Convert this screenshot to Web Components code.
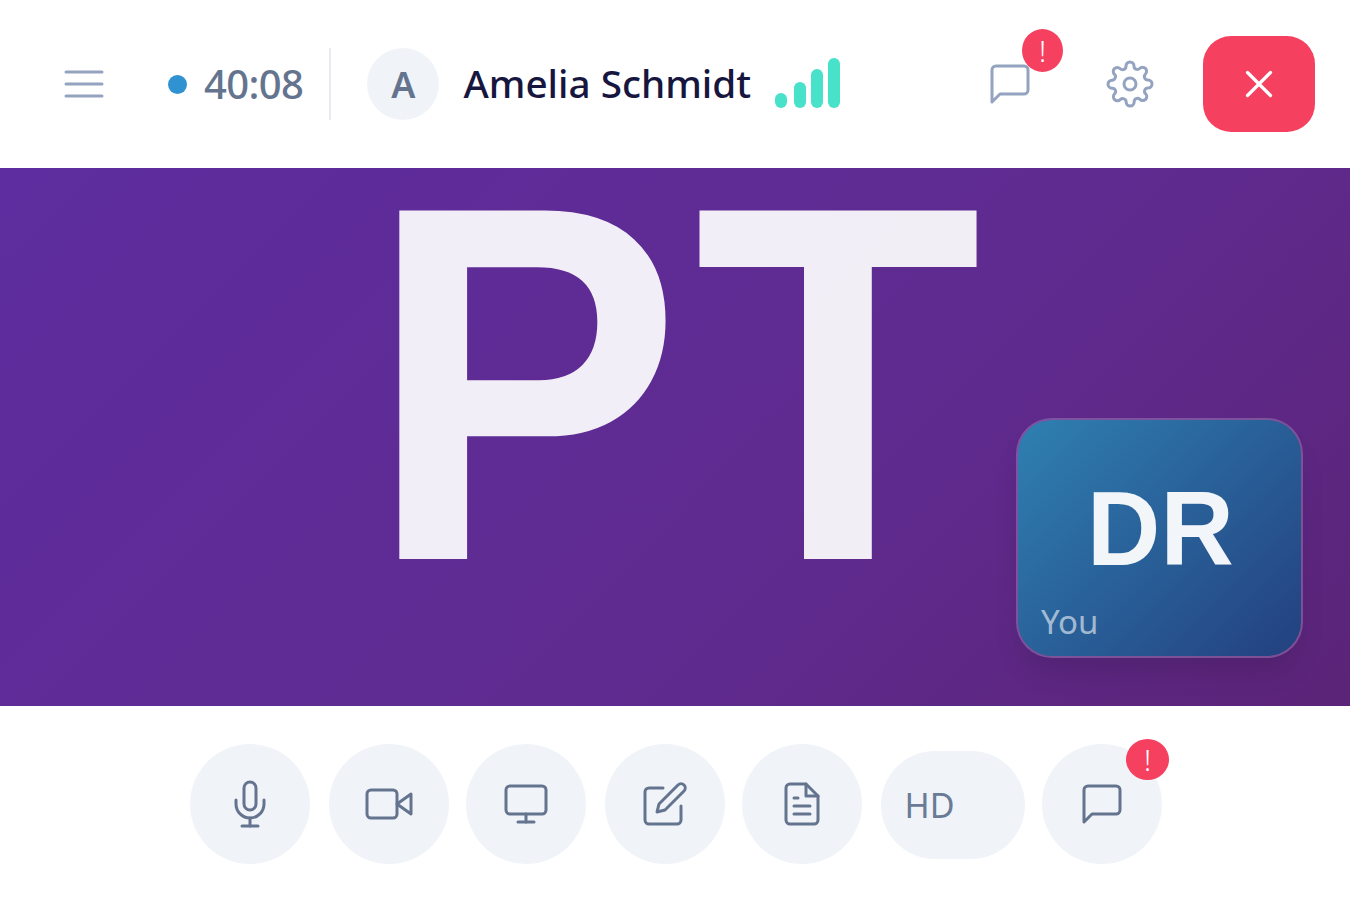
<!DOCTYPE html>
<html lang="en"><head><meta charset="utf-8"><title>Call</title>
<style>
html,body{margin:0;padding:0;background:#fff;}
body{font-family:"Noto Sans","Open Sans",sans-serif;}
</style></head>
<body>
<call-app>
  <call-header slot="header"></call-header>
  <call-stage slot="stage" initials="PT"><self-tile initials="DR" label="You"></self-tile></call-stage>
  <call-controls slot="controls"></call-controls>
</call-app>
<script>
const ICONS={
 menu:'<line x1="3" y1="12" x2="21" y2="12"/><line x1="3" y1="6" x2="21" y2="6"/><line x1="3" y1="18" x2="21" y2="18"/>',
 chat:'<path d="M21 15a2 2 0 0 1-2 2H7l-4 4V5a2 2 0 0 1 2-2h14a2 2 0 0 1 2 2z"/>',
 gear:'<circle cx="12" cy="12" r="3"/><path d="M19.4 15a1.65 1.65 0 0 0 .33 1.82l.06.06a2 2 0 0 1 0 2.83 2 2 0 0 1-2.83 0l-.06-.06a1.65 1.65 0 0 0-1.82-.33 1.65 1.65 0 0 0-1 1.51V21a2 2 0 0 1-2 2 2 2 0 0 1-2-2v-.09A1.65 1.65 0 0 0 9 19.4a1.65 1.65 0 0 0-1.82.33l-.06.06a2 2 0 0 1-2.83 0 2 2 0 0 1 0-2.83l.06-.06a1.65 1.65 0 0 0 .33-1.82 1.65 1.65 0 0 0-1.51-1H3a2 2 0 0 1-2-2 2 2 0 0 1 2-2h.09A1.65 1.65 0 0 0 4.6 9a1.65 1.65 0 0 0-.33-1.82l-.06-.06a2 2 0 0 1 0-2.83 2 2 0 0 1 2.83 0l.06.06a1.65 1.65 0 0 0 1.82.33H9a1.65 1.65 0 0 0 1-1.51V3a2 2 0 0 1 2-2 2 2 0 0 1 2 2v.09a1.65 1.65 0 0 0 1 1.51 1.65 1.65 0 0 0 1.82-.33l.06-.06a2 2 0 0 1 2.83 0 2 2 0 0 1 0 2.83l-.06.06a1.65 1.65 0 0 0-.33 1.82V9a1.65 1.65 0 0 0 1.51 1H21a2 2 0 0 1 2 2 2 2 0 0 1-2 2h-.09a1.65 1.65 0 0 0-1.51 1z"/>',
 x:'<line x1="18" y1="6" x2="6" y2="18"/><line x1="6" y1="6" x2="18" y2="18"/>',
 mic:'<path d="M12 1a3 3 0 0 0-3 3v8a3 3 0 0 0 6 0V4a3 3 0 0 0-3-3z"/><path d="M19 10v2a7 7 0 0 1-14 0v-2"/><line x1="12" y1="19" x2="12" y2="23"/><line x1="8" y1="23" x2="16" y2="23"/>',
 video:'<polygon points="23 7 16 12 23 17 23 7"/><rect x="1" y="5" width="15" height="14" rx="2" ry="2"/>',
 monitor:'<rect x="2" y="3" width="20" height="14" rx="2" ry="2"/><line x1="8" y1="21" x2="16" y2="21"/><line x1="12" y1="17" x2="12" y2="21"/>',
 edit:'<path d="M11 4H4a2 2 0 0 0-2 2v14a2 2 0 0 0 2 2h14a2 2 0 0 0 2-2v-7"/><path d="M18.5 2.5a2.121 2.121 0 0 1 3 3L12 15l-4 1 1-4 9.5-9.5z"/>',
 doc:'<path d="M14 2H6a2 2 0 0 0-2 2v16a2 2 0 0 0 2 2h12a2 2 0 0 0 2-2V8z"/><polyline points="14 2 14 8 20 8"/><line x1="16" y1="13" x2="8" y2="13"/><line x1="16" y1="17" x2="8" y2="17"/><polyline points="10 9 9 9 8 9"/>'
};
const svg=(n,size=48,sw=1.5)=>`<svg xmlns="http://www.w3.org/2000/svg" width="${size}" height="${size}" viewBox="0 0 24 24" fill="none" stroke="currentColor" stroke-width="${sw}" stroke-linecap="round" stroke-linejoin="round" aria-hidden="true">${ICONS[n]}</svg>`;

class Base extends HTMLElement{
  render(html){ if(!this.shadowRoot) this.attachShadow({mode:'open'}); this.shadowRoot.innerHTML=html; }
}
customElements.define('call-app',class extends Base{connectedCallback(){this.render(`<style>
:host{display:flex;flex-direction:column;width:100%;height:900px;background:#fff;overflow:hidden}
::slotted([slot=stage]){flex:0 0 538px}
::slotted([slot=header]){flex:0 0 168px}
::slotted([slot=controls]){flex:1 1 auto}
</style><slot name="header"></slot><slot name="stage"></slot><slot name="controls"></slot>`);}});

customElements.define('alert-badge',class extends Base{connectedCallback(){this.render(`<style>
:host{position:absolute;display:grid;place-items:center;background:#f64060;color:#fff;border-radius:50%;font:300 29px/1 "Noto Sans",sans-serif;
 width:var(--w,44px);height:var(--h,44px)}
</style>!`);}});

customElements.define('signal-bars',class extends Base{connectedCallback(){this.render(`<style>
:host{display:flex;align-items:flex-end;height:50px;gap:5px}
i{display:block;width:12px;background:#48e1c9;border-radius:7px}
i:nth-child(3){margin-left:2px}
</style><i style="height:15px"></i><i style="height:26px"></i><i style="height:39px"></i><i style="height:50px"></i>`);}});

customElements.define('call-header',class extends Base{connectedCallback(){this.render(`<style>
:host{display:flex;align-items:center;background:#fff;padding:0 35px 0 60px;box-sizing:border-box;font-family:"Noto Sans",sans-serif}
.ic{display:flex;color:#94a3c0}
.dot{width:19px;height:19px;border-radius:50%;background:#3092d0;margin-left:60px}
.time{font-size:40px;font-weight:500;color:#64748f;margin-left:17px;line-height:1;letter-spacing:-.6px}
.div{width:2px;height:72px;background:#e8ebf2;margin-left:26px}
.av{width:72px;height:72px;border-radius:50%;background:#f0f4f9;color:#64748f;display:grid;place-items:center;font-size:36px;font-weight:600;margin-left:36px}
.name{font-size:38.7px;font-weight:500;color:#16163f;margin:-2px 0 0 24px;line-height:1;white-space:nowrap}
signal-bars{margin-left:24px;margin-top:-2px}
.spacer{flex:1}
.chat{position:relative;margin-right:72px}
alert-badge{--w:41px;--h:43px;left:36px;top:-31px}
.close{width:112px;height:96px;border-radius:28px;background:#f64060;color:#fff;display:grid;place-items:center;margin-left:49px}
</style>
<span class="ic">${svg('menu')}</span>
<span class="dot"></span><span class="time">40:08</span><span class="div"></span>
<span class="av">A</span><span class="name">Amelia Schmidt</span>
<signal-bars></signal-bars><span class="spacer"></span>
<span class="ic chat">${svg('chat')}<alert-badge></alert-badge></span>
<span class="ic">${svg('gear')}</span>
<span class="close">${svg('x',46,1.7)}</span>`);}});

customElements.define('call-stage',class extends Base{connectedCallback(){this.render(`<style>
:host{display:flex;position:relative;align-items:center;justify-content:center;box-sizing:border-box;padding-bottom:92px;
 background:linear-gradient(135deg,#5e2d9f 0%,#5f2b90 60%,#5b2478 100%)}
.big{font:700 486px/.8 "Liberation Sans",Arial,sans-serif;letter-spacing:13px;color:rgba(255,255,255,.92);white-space:nowrap;transform:translateX(6.5px) scale(.968,1.042);transform-origin:50% 362px}
::slotted(self-tile){position:absolute;left:1016px;top:250px}
</style><div class="big">${this.getAttribute('initials')}</div><slot></slot>`);}});

customElements.define('self-tile',class extends Base{connectedCallback(){this.render(`<style>
:host{display:grid;place-items:center;box-sizing:border-box;width:287px;height:240px;padding:0 0 20px 1.5px;border-radius:36px;
 border:2.5px solid rgba(255,255,255,.2);background:linear-gradient(135deg,#2f80b2 0%,#23407f 100%);background-clip:padding-box;
 box-shadow:0 20px 30px -8px rgba(0,0,0,.13);position:absolute}
.i{font:700 103px/1 "Liberation Sans",Arial,sans-serif;color:rgba(255,255,255,.94);transform:scale(.985,1.03)}
.l{position:absolute;left:23px;bottom:14px;font:400 33px/1.2 "Noto Sans",sans-serif;color:rgba(255,255,255,.58)}
</style><span class="i">${this.getAttribute('initials')}</span><span class="l">${this.getAttribute('label')}</span>`);}});

customElements.define('round-btn',class extends Base{connectedCallback(){this.render(`<style>
:host{display:grid;place-items:center;position:relative;width:119.5px;height:120px;border-radius:60px;background:#f0f4f9;color:#64748f;font:400 34px/1 "Noto Sans",sans-serif;flex:none}
:host([wide]){width:144px;height:108px;place-items:center start;padding:0 0 0 23.5px;box-sizing:border-box;border-radius:54px;margin-top:1px;color:#6b7b95}
</style><slot></slot>`);}});

customElements.define('call-controls',class extends Base{connectedCallback(){this.render(`<style>
:host{display:flex;align-items:flex-start;padding:38px 0 0 190px;box-sizing:border-box;background:#fff}
.w{display:flex;height:120px;align-items:center}
round-btn svg{display:block}
.a{margin-left:19.5px}.b{margin-left:17.5px}
.last{margin-left:17px}
alert-badge{--w:43px;--h:41px;left:84px;top:-5px}
</style>
<round-btn>${svg('mic')}</round-btn>
<round-btn class="a">${svg('video')}</round-btn>
<round-btn class="b">${svg('monitor')}</round-btn>
<round-btn class="a">${svg('edit')}</round-btn>
<round-btn class="b">${svg('doc')}</round-btn>
<div class="w a"><round-btn wide>HD</round-btn></div>
<round-btn class="last">${svg('chat')}<alert-badge></alert-badge></round-btn>`);}});
</script>
</body></html>
